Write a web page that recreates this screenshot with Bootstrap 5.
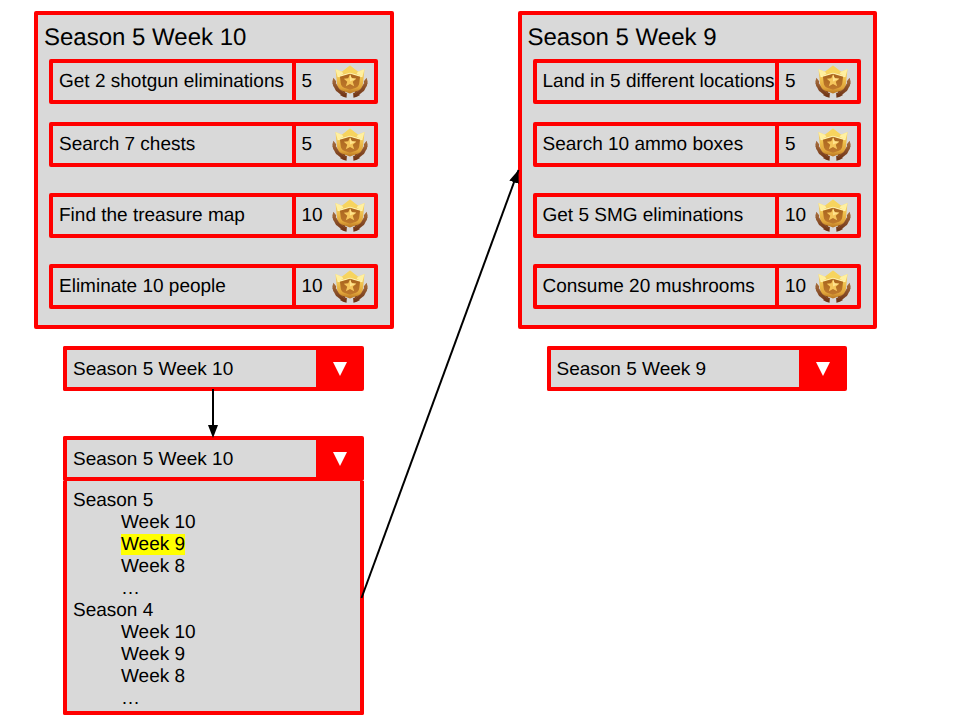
<!DOCTYPE html>
<html lang="en">
<head>
<meta charset="utf-8">
<meta name="viewport" content="width=device-width, initial-scale=1">
<title>Weekly challenges</title>
<link href="https://cdn.jsdelivr.net/npm/bootstrap@5.3.0/dist/css/bootstrap.min.css" rel="stylesheet">
<style>
  :root { --line: #f00; --fill: #d9d9d9; }
  body { font-family: "Liberation Sans", Arial, sans-serif; font-size: 19px; line-height: 22px; color: #000; background: #fff; text-rendering: geometricPrecision; }
  .flow-board { display: grid; grid-template-columns: 1fr 1fr; column-gap: 124px; padding: 11px 83px 5px 34px; align-items: start; }
  .panel { background: var(--fill); border: 4px solid var(--line); border-radius: 2px; padding: 9px 12px 16px 11px; }
  .panel h2 { font-size: 24px; line-height: 28px; margin: 0 0 7px -5px; font-weight: 400; }
  .quests { display: grid; row-gap: 26px; }
  .quest { border: 4px solid var(--line); border-radius: 2px; height: 45px; }
  .quest:first-child { margin-bottom: -8px; }
  .quest-name { padding-left: 6px; white-space: nowrap; }
  .reward { width: 82px; border-left: 4px solid var(--line); padding: 0 6px; }
  .picker-area { margin: 17px 30px 0 29px; }
  .picker select { appearance: none; background: var(--fill); border: 4px solid var(--line); border-right: 0; border-radius: 2px 0 0 2px; height: 45px; padding: 0 6px; color: #000; min-width: 0; }
  .picker-arrow { width: 48px; background: var(--line); border-radius: 0 2px 2px 0; pointer-events: none; }
  .options { background: var(--fill); border: 4px solid var(--line); border-top: 0; border-radius: 0 0 2px 2px; padding: 9px 6px 1px; }
  .options ul ul { padding-left: 48px; }
  .picked { background: #ff0; }
  .link-down { height: 45px; }
  .link-down svg { margin: -2px 0; }
</style>
<script src="https://cdn.jsdelivr.net/npm/bootstrap@5.3.0/dist/js/bootstrap.bundle.min.js"></script>
</head>
<body>
<svg class="position-absolute" width="0" height="0" aria-hidden="true">
  <defs>
    <linearGradient id="gold" x1="0" y1="0" x2="0" y2="1"><stop offset="0" stop-color="#fbe27c"/><stop offset=".5" stop-color="#eebf4c"/><stop offset=".8" stop-color="#e0a43a"/><stop offset="1" stop-color="#b87420"/></linearGradient>
    <linearGradient id="bronze" x1="0" y1="0" x2="0" y2="1"><stop offset="0" stop-color="#a8641e"/><stop offset="1" stop-color="#c07a2c"/></linearGradient>
    <linearGradient id="leaf" x1="0" y1="0" x2="0" y2="1"><stop offset="0" stop-color="#a9703f"/><stop offset="1" stop-color="#6b2f12"/></linearGradient>
    <symbol id="star" viewBox="37 29 104 97">
      <g id="branch" fill="url(#leaf)">
        <path d="M41 66q-5 12 0 23 8 14 21 22l14 5-1-12-14-8q-13-11-20-30z"/>
        <path d="M41 65l8 10-1 11-9-9zM38 79l11 7 3 11-10-6zM43 93l11 4 6 9-11-2zM51 105l12-1 7 6-9 3zM60 115l9-7 11 1-1 14-10-3z"/>
        <path d="M46 79l12 19 16 12" fill="none" stroke="#b97a48" stroke-width="1"/>
      </g>
      <use href="#branch" transform="matrix(-1 0 0 1 178 0)"/>
      <path d="M47 40l19 8 23-18 23 18 19-8-4 38q-1 17-14 24l-24 9-24-9q-13-7-14-24z" fill="url(#gold)"/>
      <path d="M47 40l19 8 4 6-17 8zM131 40l-19 8-4 6 17 8z" fill="#fff0a0"/>
      <path d="M66 48l23-18 23 18-23 6z" fill="#f7d45e"/>
      <path d="M53 60l36-9 36 9-1 4-35-9-35 9z" fill="#fff3b0"/>
      <path d="M60 62l29-8 29 8-2 18q-1 11-10 14l-17 6-17-6q-9-3-10-14z" fill="url(#bronze)"/>
      <path d="M89 55l5 12 13 1-10 9 4 13-12-7-12 7 4-13-10-9 13-1z" fill="#f5c65c"/>
      <path d="M89 55l5 12 13 1-18 8z" fill="#ffe38c"/>
    </symbol>
  </defs>
</svg>

<main class="flow-board position-relative" id="board">
  <div>
    <section class="panel">
      <h2>Season 5 Week 10</h2>
      <div class="quests">
        <div class="quest d-flex"><div class="quest-name flex-grow-1 d-flex align-items-center">Get 2 shotgun eliminations</div><div class="reward d-flex align-items-center justify-content-between flex-shrink-0"><span>5</span><svg width="36" height="34" role="img" aria-label="stars"><use href="#star"/></svg></div></div>
        <div class="quest d-flex"><div class="quest-name flex-grow-1 d-flex align-items-center">Search 7 chests</div><div class="reward d-flex align-items-center justify-content-between flex-shrink-0"><span>5</span><svg width="36" height="34" role="img" aria-label="stars"><use href="#star"/></svg></div></div>
        <div class="quest d-flex"><div class="quest-name flex-grow-1 d-flex align-items-center">Find the treasure map</div><div class="reward d-flex align-items-center justify-content-between flex-shrink-0"><span>10</span><svg width="36" height="34" role="img" aria-label="stars"><use href="#star"/></svg></div></div>
        <div class="quest d-flex"><div class="quest-name flex-grow-1 d-flex align-items-center">Eliminate 10 people</div><div class="reward d-flex align-items-center justify-content-between flex-shrink-0"><span>10</span><svg width="36" height="34" role="img" aria-label="stars"><use href="#star"/></svg></div></div>
      </div>
    </section>
    <div class="picker-area">
      <div class="picker d-flex">
        <select class="flex-grow-1" aria-label="Week"><option>Season 5 Week 10</option></select>
        <span class="picker-arrow d-flex align-items-center justify-content-center" aria-hidden="true"><svg width="14" height="14"><path d="M0 0h14l-7 14z" fill="#fff"/></svg></span>
      </div>
      <div class="link-down d-flex justify-content-center position-relative" aria-hidden="true"><svg class="flex-shrink-0" width="12" height="49"><path d="M6 0v38" stroke="#000" stroke-width="2"/><path d="M1 36h10l-5 13z"/></svg></div>
      <div class="picker d-flex">
        <select class="flex-grow-1" aria-label="Week, list open"><option>Season 5 Week 10</option></select>
        <span class="picker-arrow d-flex align-items-center justify-content-center" aria-hidden="true"><svg width="14" height="14"><path d="M0 0h14l-7 14z" fill="#fff"/></svg></span>
      </div>
      <div class="options" id="options">
        <ul class="list-unstyled mb-0">
          <li>Season 5
            <ul class="list-unstyled"><li>Week 10</li><li><span class="picked">Week 9</span></li><li>Week 8</li><li>…</li></ul>
          </li>
          <li>Season 4
            <ul class="list-unstyled"><li>Week 10</li><li>Week 9</li><li>Week 8</li><li>…</li></ul>
          </li>
        </ul>
      </div>
    </div>
  </div>

  <div>
    <section class="panel" id="result">
      <h2>Season 5 Week 9</h2>
      <div class="quests">
        <div class="quest d-flex"><div class="quest-name flex-grow-1 d-flex align-items-center">Land in 5 different locations</div><div class="reward d-flex align-items-center justify-content-between flex-shrink-0"><span>5</span><svg width="36" height="34" role="img" aria-label="stars"><use href="#star"/></svg></div></div>
        <div class="quest d-flex"><div class="quest-name flex-grow-1 d-flex align-items-center">Search 10 ammo boxes</div><div class="reward d-flex align-items-center justify-content-between flex-shrink-0"><span>5</span><svg width="36" height="34" role="img" aria-label="stars"><use href="#star"/></svg></div></div>
        <div class="quest d-flex"><div class="quest-name flex-grow-1 d-flex align-items-center">Get 5 SMG eliminations</div><div class="reward d-flex align-items-center justify-content-between flex-shrink-0"><span>10</span><svg width="36" height="34" role="img" aria-label="stars"><use href="#star"/></svg></div></div>
        <div class="quest d-flex"><div class="quest-name flex-grow-1 d-flex align-items-center">Consume 20 mushrooms</div><div class="reward d-flex align-items-center justify-content-between flex-shrink-0"><span>10</span><svg width="36" height="34" role="img" aria-label="stars"><use href="#star"/></svg></div></div>
      </div>
    </section>
    <div class="picker-area">
      <div class="picker d-flex">
        <select class="flex-grow-1" aria-label="Week"><option>Season 5 Week 9</option></select>
        <span class="picker-arrow d-flex align-items-center justify-content-center" aria-hidden="true"><svg width="14" height="14"><path d="M0 0h14l-7 14z" fill="#fff"/></svg></span>
      </div>
    </div>
  </div>

  <svg class="position-absolute top-0 start-0 w-100 h-100 pe-none" aria-hidden="true">
    <defs><marker id="tip" markerUnits="userSpaceOnUse" markerWidth="14" markerHeight="10" refX="13" refY="5" orient="auto"><path d="M0 0l13 5-13 5z"/></marker></defs>
    <line id="connector" stroke="#000" stroke-width="2" marker-end="url(#tip)"/>
  </svg>
</main>
<script>
  // Joins the open list's right edge to the resulting panel's left edge.
  const board = document.getElementById('board');
  const options = document.getElementById('options');
  const result = document.getElementById('result');
  const line = document.getElementById('connector');
  function connect() {
    const b = board.getBoundingClientRect();
    const from = options.getBoundingClientRect();
    const to = result.getBoundingClientRect();
    line.setAttribute('x1', from.right - b.left - 2);
    line.setAttribute('y1', from.top + from.height / 2 - b.top);
    line.setAttribute('x2', to.left - b.left + 1);
    line.setAttribute('y2', to.top + to.height / 2 - b.top);
  }
  connect();
  window.addEventListener('resize', connect);
</script>
</body>
</html>
